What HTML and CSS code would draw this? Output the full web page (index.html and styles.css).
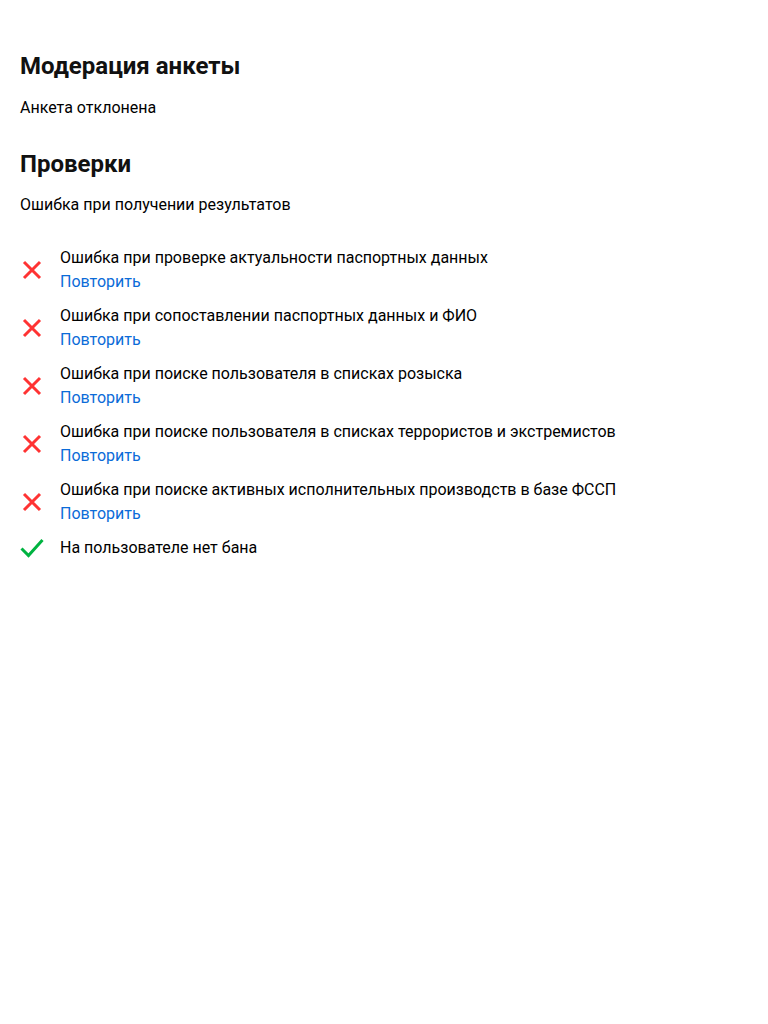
FILE: index.html
```html
<!DOCTYPE html>
<html lang="ru">
<head>
<meta charset="utf-8">
<link rel="stylesheet" href="styles.css">
</head>
<body>
<main class="page">
  <section class="section">
    <h1 class="title">Модерация анкеты</h1>
    <p class="text">Анкета отклонена</p>
  </section>
  <section class="section section-checks">
    <h2 class="title">Проверки</h2>
    <p class="text text-sub">Ошибка при получении результатов</p>
    <ul class="checks">
      <li class="check">
        <svg class="icon" viewBox="0 0 24 24"><path d="M4 4L20 20M20 4L4 20" stroke="#ff3333" stroke-width="3" fill="none"/></svg>
        <div class="check-body"><div class="check-title">Ошибка при проверке актуальности паспортных данных</div><a class="link" href="#">Повторить</a></div>
      </li>
      <li class="check">
        <svg class="icon" viewBox="0 0 24 24"><path d="M4 4L20 20M20 4L4 20" stroke="#ff3333" stroke-width="3" fill="none"/></svg>
        <div class="check-body"><div class="check-title">Ошибка при сопоставлении паспортных данных и ФИО</div><a class="link" href="#">Повторить</a></div>
      </li>
      <li class="check">
        <svg class="icon" viewBox="0 0 24 24"><path d="M4 4L20 20M20 4L4 20" stroke="#ff3333" stroke-width="3" fill="none"/></svg>
        <div class="check-body"><div class="check-title">Ошибка при поиске пользователя в списках розыска</div><a class="link" href="#">Повторить</a></div>
      </li>
      <li class="check">
        <svg class="icon" viewBox="0 0 24 24"><path d="M4 4L20 20M20 4L4 20" stroke="#ff3333" stroke-width="3" fill="none"/></svg>
        <div class="check-body"><div class="check-title">Ошибка при поиске пользователя в списках террористов и экстремистов</div><a class="link" href="#">Повторить</a></div>
      </li>
      <li class="check">
        <svg class="icon" viewBox="0 0 24 24"><path d="M4 4L20 20M20 4L4 20" stroke="#ff3333" stroke-width="3" fill="none"/></svg>
        <div class="check-body"><div class="check-title">Ошибка при поиске активных исполнительных производств в базе ФССП</div><a class="link" href="#">Повторить</a></div>
      </li>
      <li class="check">
        <svg class="icon" viewBox="0 0 24 24"><path d="M1.5 12.5L8.5 19.5L22.5 4" stroke="#00b341" stroke-width="3" fill="none"/></svg>
        <div class="check-body"><div class="check-title">На пользователе нет бана</div></div>
      </li>
    </ul>
  </section>
</main>
</body>
</html>
```
FILE: styles.css
```css
html, body {
  margin: 0;
  padding: 0;
  background: #fff;
}
body {
  font-family: Roboto, "Liberation Sans", sans-serif;
  color: #000;
  font-size: 16px;
  line-height: 24px;
}
.page {
  padding: 52px 20px 20px;
}
.title {
  margin: 0;
  font-size: 24px;
  line-height: 28px;
  font-weight: 700;
  color: #111;
}
.text {
  margin: 16px 0 0;
}
.text-sub {
  margin-top: 15px;
}
.section-checks {
  margin-top: 30px;
}
.checks {
  list-style: none;
  margin: 29px 0 0;
  padding: 0;
  display: flex;
  flex-direction: column;
  gap: 10px;
}
.check {
  display: flex;
  align-items: center;
  gap: 16px;
}
.icon {
  width: 24px;
  height: 24px;
  flex: none;
}
.check-body {
  display: flex;
  flex-direction: column;
}
.link {
  color: #0b6bd8;
  text-decoration: none;
}
```
